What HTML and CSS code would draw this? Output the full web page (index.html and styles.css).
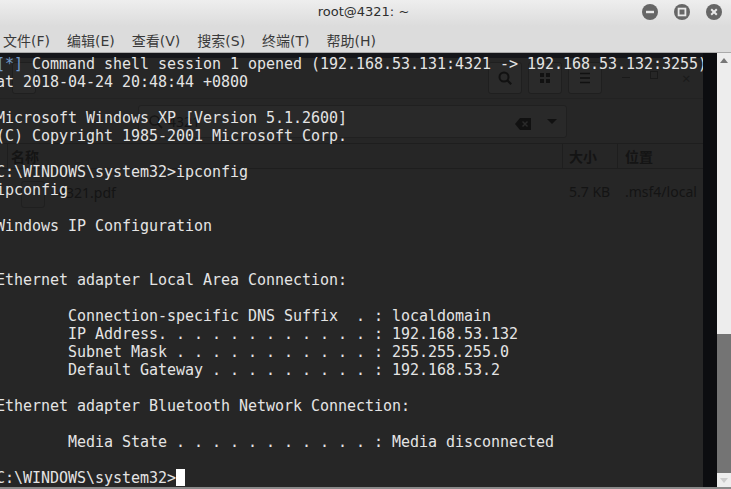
FILE: index.html
```html
<!DOCTYPE html>
<html lang="zh">
<head>
<meta charset="utf-8">
<title>root@4321: ~</title>
<link rel="stylesheet" href="styles.css">
</head>
<body>
<div class="window">
  <header class="titlebar">
    <div class="title">root@4321: ~</div>
    <div class="controls">
      <span class="wbtn"><svg width="16" height="16" viewBox="0 0 16 16"><rect x="4" y="6.8" width="8" height="2.4" fill="#e8e8e8"/></svg></span>
      <span class="wbtn"><svg width="16" height="16" viewBox="0 0 16 16"><rect x="4.6" y="4.6" width="6.8" height="6.8" fill="none" stroke="#e8e8e8" stroke-width="1.8"/></svg></span>
      <span class="wbtn"><svg width="16" height="16" viewBox="0 0 16 16"><path d="M5.2 5.2l5.6 5.6M10.8 5.2l-5.6 5.6" stroke="#e8e8e8" stroke-width="2"/></svg></span>
    </div>
  </header>
  <nav class="menubar">
    <span>文件(F)</span><span>编辑(E)</span><span>查看(V)</span><span>搜索(S)</span><span>终端(T)</span><span>帮助(H)</span>
  </nav>
  <main class="body">
    <section class="terminal">
      <div class="ghost">
        <div class="ghost-top"></div>
        <div class="ghost-head">
          <span class="gbtn gb-left"></span>
          <span class="gbtn gb-search"><svg width="16" height="16" viewBox="0 0 16 16"><circle cx="7" cy="7" r="4.5" fill="none" stroke="#111" stroke-width="2"/><path d="M10.2 10.2l4 4" stroke="#111" stroke-width="2.2"/></svg></span>
          <span class="gbtn gb-grid"><svg width="12" height="12" viewBox="0 0 12 12"><path d="M1 1h4v4H1zM7 1h4v4H7zM1 7h4v4H1zM7 7h4v4H7z" fill="#111"/></svg></span>
          <span class="gbtn gb-menu"><svg width="12" height="12" viewBox="0 0 12 12"><path d="M1 1.5h10M1 6h10M1 10.5h10" stroke="#111" stroke-width="1.6"/></svg></span>
          <span class="gctl gc-min"></span><span class="gctl gc-max"></span><span class="gctl gc-close">×</span>
        </div>
        <div class="ghost-search">
          <span class="gs-icon"><svg width="16" height="16" viewBox="0 0 16 16"><circle cx="6.5" cy="6.5" r="4.5" fill="none" stroke="#161616" stroke-width="1.6"/><path d="M10 10l4 4" stroke="#161616" stroke-width="1.8"/></svg></span>
          <span class="gs-text">4321</span>
          <span class="gs-clear"><svg width="16" height="12" viewBox="0 0 16 12"><path d="M0 6L5 0h11v12H5z" fill="#111"/><path d="M7.5 3.5l5 5M12.5 3.5l-5 5" stroke="#2a2a2a" stroke-width="1.5"/></svg></span>
          <span class="gs-caret"></span>
        </div>
        <div class="ghost-cols">
          <span class="gc-name">名称</span><span class="gc-size">大小</span><span class="gc-loc">位置</span>
        </div>
        <div class="ghost-row">
          <span class="gr-icon"></span><span class="gr-name">4321.pdf</span><span class="gr-size">5.7 KB</span><span class="gr-loc">.msf4/local</span>
        </div>
      </div>
      <pre class="output"> <span class="info">[*]</span> Command shell session 1 opened (192.168.53.131:4321 -&gt; 192.168.53.132:3255)
 at 2018-04-24 20:48:44 +0800

 Microsoft Windows XP [Version 5.1.2600]
 (C) Copyright 1985-2001 Microsoft Corp.

 C:\WINDOWS\system32&gt;ipconfig
 ipconfig

 Windows IP Configuration


 Ethernet adapter Local Area Connection:

         Connection-specific DNS Suffix  . : localdomain
         IP Address. . . . . . . . . . . . : 192.168.53.132
         Subnet Mask . . . . . . . . . . . : 255.255.255.0
         Default Gateway . . . . . . . . . : 192.168.53.2

 Ethernet adapter Bluetooth Network Connection:

         Media State . . . . . . . . . . . : Media disconnected

 C:\WINDOWS\system32&gt;<span class="cursor"></span></pre>
    </section>
    <aside class="edge"></aside>
    <aside class="scrollbar">
      <span class="arrow up"></span>
      <span class="track"><span class="thumb"></span></span>
      <span class="arrow down"></span>
    </aside>
  </main>
  <div class="bottom"></div>
</div>
</body>
</html>
```
FILE: styles.css
```css
html, body { margin: 0; padding: 0; height: 100%; overflow: hidden; }
body { background: #1c1c1c; }
.window { width: 731px; height: 489px; display: flex; flex-direction: column; overflow: hidden; font-family: "DejaVu Sans", "Noto Sans CJK SC", sans-serif; }

.titlebar { height: 26px; flex: none; display: flex; align-items: center; justify-content: center; position: relative; background: linear-gradient(#eeeeee, #dcdcdc); }
.title { font-family: "DejaVu Sans", sans-serif; font-size: 13px; color: #2e2e2e; padding-bottom: 3px; margin-left: -4px; }
.controls { position: absolute; top: 4px; right: 9px; display: flex; gap: 16px; }
.wbtn { width: 16px; height: 16px; border-radius: 50%; background: #666; display: block; }
.wbtn svg { display: block; }

.menubar { flex: none; display: flex; gap: 17px; align-items: center; padding-left: 3px; padding-top: 2px; height: 24px; background: #dcdcdc; border-bottom: 1px solid #aaa; font-size: 14px; color: #3a3a3a; font-family: "DejaVu Sans", "Noto Sans CJK SC", sans-serif; }

.body { flex: none; height: 434px; display: flex; }
.terminal { width: 703px; flex: none; position: relative; overflow: hidden; background: #262626; }
.output { position: relative; margin: 2px 0 0 -13px; font-family: "DejaVu Sans Mono", monospace; font-size: 15px; line-height: 18px; letter-spacing: -0.03px; color: #e4e4e4; }
.info { color: #6f97c7; }
.cursor { display: inline-block; width: 9px; height: 17px; background: #fff; vertical-align: -3px; }

.ghost { position: absolute; inset: 0; color: #141414; font-family: "Noto Sans", sans-serif; font-size: 14px; }
.ghost-top { position: absolute; left: 0; right: 0; top: 0; height: 5px; background: #15161a; }
.ghost-head { position: absolute; left: 0; right: 0; top: 0; height: 45px; border-bottom: 1px solid #222; }
.gbtn { position: absolute; top: 9px; height: 30px; width: 32px; border: 1px solid #1f1f1f; border-radius: 3px; background: #2a2a2a; display: flex; align-items: center; justify-content: center; }
.gb-left { left: 12px; width: 22px; }
.gb-search { left: 488px; }
.gb-grid { left: 528px; }
.gb-menu { left: 568px; }
.gctl { position: absolute; color: #1a1a1a; font-size: 15px; line-height: 14px; }
.gc-min { left: 622px; top: 24px; width: 8px; height: 1px; background: #1a1a1a; }
.gc-max { left: 650px; width: 6px; height: 6px; border: 1px solid #1a1a1a; top: 18px; }
.gc-close { left: 682px; top: 18px; }
.ghost-search { position: absolute; left: 138px; top: 52px; width: 427px; height: 31px; border: 1px solid #202020; border-radius: 3px; background: #292929; }
.gs-icon { position: absolute; left: 9px; top: 8px; }
.gs-text { position: absolute; left: 29px; top: 6px; }
.gs-clear { position: absolute; left: 376px; top: 9px; }
.gs-caret { position: absolute; left: 408px; top: 13px; border: 5px solid transparent; border-top: 5px solid #111; border-bottom: 0; }
.ghost-cols { position: absolute; left: 0; right: 0; top: 90px; height: 24px; border-top: 1px solid #1e1e1e; border-bottom: 1px solid #1e1e1e; font-family: "Noto Sans CJK SC", sans-serif; font-weight: 700; font-size: 14px; }
.gc-name, .gc-size, .gc-loc { position: absolute; top: 0; bottom: 0; line-height: 24px; border-left: 1px solid #1e1e1e; }
.gc-name { left: 7px; padding-left: 3px; width: 40px; }
.gc-size { left: 562px; padding-left: 6px; width: 48px; }
.gc-loc { left: 617px; padding-left: 7px; width: 60px; }
.ghost-row { position: absolute; left: 0; right: 0; top: 116px; height: 40px; }
.gr-icon { position: absolute; left: 21px; top: 12px; width: 22px; height: 25px; border: 1px solid #1f1f1f; border-radius: 3px; }
.gr-name { position: absolute; left: 58px; top: 14px; }
.gr-size { position: absolute; left: 569px; top: 13px; }
.gr-loc { position: absolute; left: 625px; top: 13px; }

.edge { width: 14px; flex: none; background: #0c0d10; }
.scrollbar { width: 14px; flex: none; display: flex; flex-direction: column; background: #ededed; }
.arrow { height: 14px; flex: none; display: flex; align-items: center; justify-content: center; }
.arrow::before { content: ""; border: 4px solid transparent; }
.arrow.up::before { border-bottom: 5px solid #777; border-top: 0; }
.arrow.down::before { border-top: 5px solid #ccc; border-bottom: 0; }
.track { flex: 1; display: flex; flex-direction: column; justify-content: flex-end; }
.thumb { height: 139px; background: #747474; display: block; }

.bottom { flex: 1; background: #8a8a8a; }
```
